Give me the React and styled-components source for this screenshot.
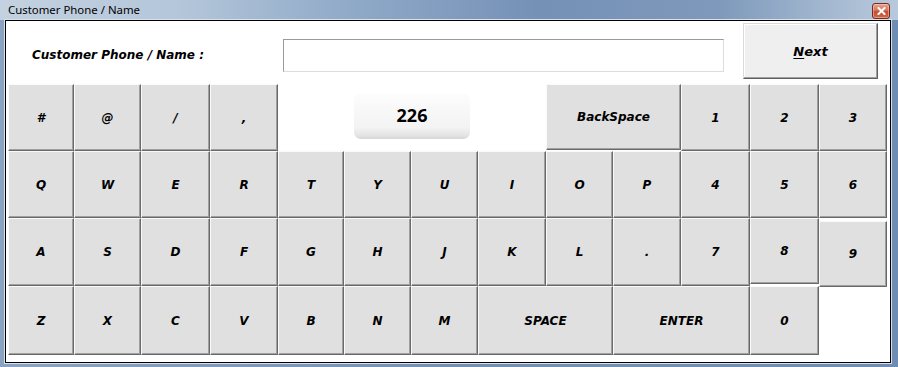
import React from "react";
import styled, { createGlobalStyle } from "styled-components";

const Global = createGlobalStyle`
  html, body { margin: 0; padding: 0; background: #7b97b9; overflow: hidden; }
  * { box-sizing: border-box; }
`;

const Window = styled.div`
  width: 898px;
  height: 367px;
  display: flex;
  flex-direction: column;
  background: linear-gradient(90deg, #8aa3c2 0%, #7390b4 50%, #6f8db3 100%);
`;

const TitleBar = styled.div`
  height: 20px;
  flex: 0 0 20px;
  display: flex;
  align-items: center;
  justify-content: space-between;
  padding: 0 8px 0 8px;
  background: linear-gradient(
    90deg,
    #c3d1e0 0%,
    #b4c6da 20%,
    #8ea8c7 40%,
    #7591b6 60%,
    #7e99bb 80%,
    #a6bad2 93%,
    #b8c9dc 100%
  );
`;

const Title = styled.span`
  font-family: "Noto Sans", "Open Sans", sans-serif;
  font-size: 11.4px;
  color: #000;
  line-height: 20px;
  margin-top: -1px;
`;

const CloseBtn = styled.div`
  width: 18px;
  height: 16px;
  margin-top: 1px;
  border: 1px solid #7a2a1c;
  border-radius: 3px;
  background: linear-gradient(#e9a490 0%, #d6755c 45%, #c54b2e 55%, #cf6a4c 100%);
  display: flex;
  align-items: center;
  justify-content: center;
  box-shadow: inset 0 0 0 1px rgba(255, 220, 210, 0.45);
`;

const Client = styled.div`
  margin-left: 5px;
  width: 886px;
  height: 343px;
  border: 1px solid #000;
  box-shadow: 0 0 0 1px #d7e1ec;
  background: #fff;
  padding: 0 3px 7px 2px;
  display: flex;
  flex-direction: column;
`;

const Header = styled.div`
  height: 63px;
  flex: 0 0 63px;
  display: flex;
  align-items: flex-start;
  padding-left: 24px;
`;

const Label = styled.div`
  flex: 0 0 251px;
  margin-top: 27px;
  font-family: "DejaVu Sans", Verdana, sans-serif;
  font-weight: bold;
  font-style: italic;
  font-size: 12px;
  color: #000;
`;

const Input = styled.input`
  flex: 0 0 441px;
  height: 33px;
  margin-top: 18px;
  border: 1px solid;
  border-color: #9a9a9a #dcdcdc #dcdcdc #9a9a9a;
  background: #fff;
  outline: none;
`;

const NextButton = styled.button`
  flex: 0 0 135px;
  height: 56px;
  margin-top: 2px;
  margin-left: 19px;
  background: #efefef;
  border: 1px solid;
  border-color: #dadada #5f5f5f #5f5f5f #dadada;
  box-shadow: inset -1px -1px 0 #a0a0a0, inset 1px 1px 0 #fff;
  font-family: "DejaVu Sans", Verdana, sans-serif;
  font-weight: bold;
  font-style: italic;
  font-size: 13px;
  color: #000;
  padding: 0;
  u { text-decoration: underline; text-underline-offset: 2px; }
`;

const Keys = styled.div`
  display: grid;
  grid-template-columns: 66px 67px 69px 68px 66px 67px 67px 68px 67px 68px 69px 69px 68px;
  grid-template-rows: 67px 67px 68px 69px;
`;

const Key = styled.button`
  grid-column: span ${(p) => p.$span || 1};
  margin: ${(p) => p.$m || "0"};
  background: #e0e0e0;
  border: 1px solid;
  border-color: #fafafa #696969 #696969 #fafafa;
  box-shadow: inset -1px -1px 0 #a0a0a0;
  font-family: "DejaVu Sans", Verdana, sans-serif;
  font-weight: bold;
  font-style: italic;
  font-size: 12px;
  color: #000;
  padding: 0;
  display: flex;
  align-items: center;
  justify-content: center;
`;

const DisplayCell = styled.div`
  grid-column: span 4;
  display: flex;
  justify-content: center;
  align-items: flex-start;
  padding-top: 9px;
`;

const Counter = styled.div`
  width: 116px;
  height: 46px;
  border-radius: 7px;
  background: linear-gradient(#fdfdfd 0%, #f8f8f8 35%, #f3f3f3 75%, #e4e4e4 92%, #d6d6d6 100%);
  display: flex;
  align-items: center;
  justify-content: center;
  font-family: "Open Sans", "Noto Sans", sans-serif;
  font-weight: bold;
  font-size: 18px;
  color: #000;
  padding-bottom: 3px;
`;

const Empty = styled.div``;

const row0 = ["#", "@", "/", ","];
const row1 = ["Q", "W", "E", "R", "T", "Y", "U", "I", "O", "P", "4", "5", "6"];
const row2 = ["A", "S", "D", "F", "G", "H", "J", "K", "L", ".", "7"];
const row3 = ["Z", "X", "C", "V", "B", "N", "M"];

export default function App() {
  return (
    <>
      <Global />
      <Window>
        <TitleBar>
          <Title>Customer Phone / Name</Title>
          <CloseBtn>
            <svg width="9" height="8" viewBox="0 0 9 8">
              <path d="M1.5 1 L7.5 7 M7.5 1 L1.5 7" stroke="#fff" strokeWidth="2" strokeLinecap="square" />
            </svg>
          </CloseBtn>
        </TitleBar>
        <Client>
          <Header>
            <Label>Customer Phone / Name :</Label>
            <Input />
            <NextButton>
              <u>N</u>ext
            </NextButton>
          </Header>
          <Keys>
            {row0.map((k) => (
              <Key key={k}>{k}</Key>
            ))}
            <DisplayCell>
              <Counter>226</Counter>
            </DisplayCell>
            <Key $span={2} $m="0 0 1px 0">BackSpace</Key>
            <Key>1</Key>
            <Key>2</Key>
            <Key>3</Key>
            {row1.map((k) => (
              <Key key={k}>{k}</Key>
            ))}
            {row2.map((k) => (
              <Key key={k}>{k}</Key>
            ))}
            <Key $m="0 0 2px 0">8</Key>
            <Key $m="3px 0 -1px 0">9</Key>
            {row3.map((k) => (
              <Key key={k}>{k}</Key>
            ))}
            <Key $span={2}>SPACE</Key>
            <Key $span={2}>ENTER</Key>
            <Key>0</Key>
            <Empty />
          </Keys>
        </Client>
      </Window>
    </>
  );
}
